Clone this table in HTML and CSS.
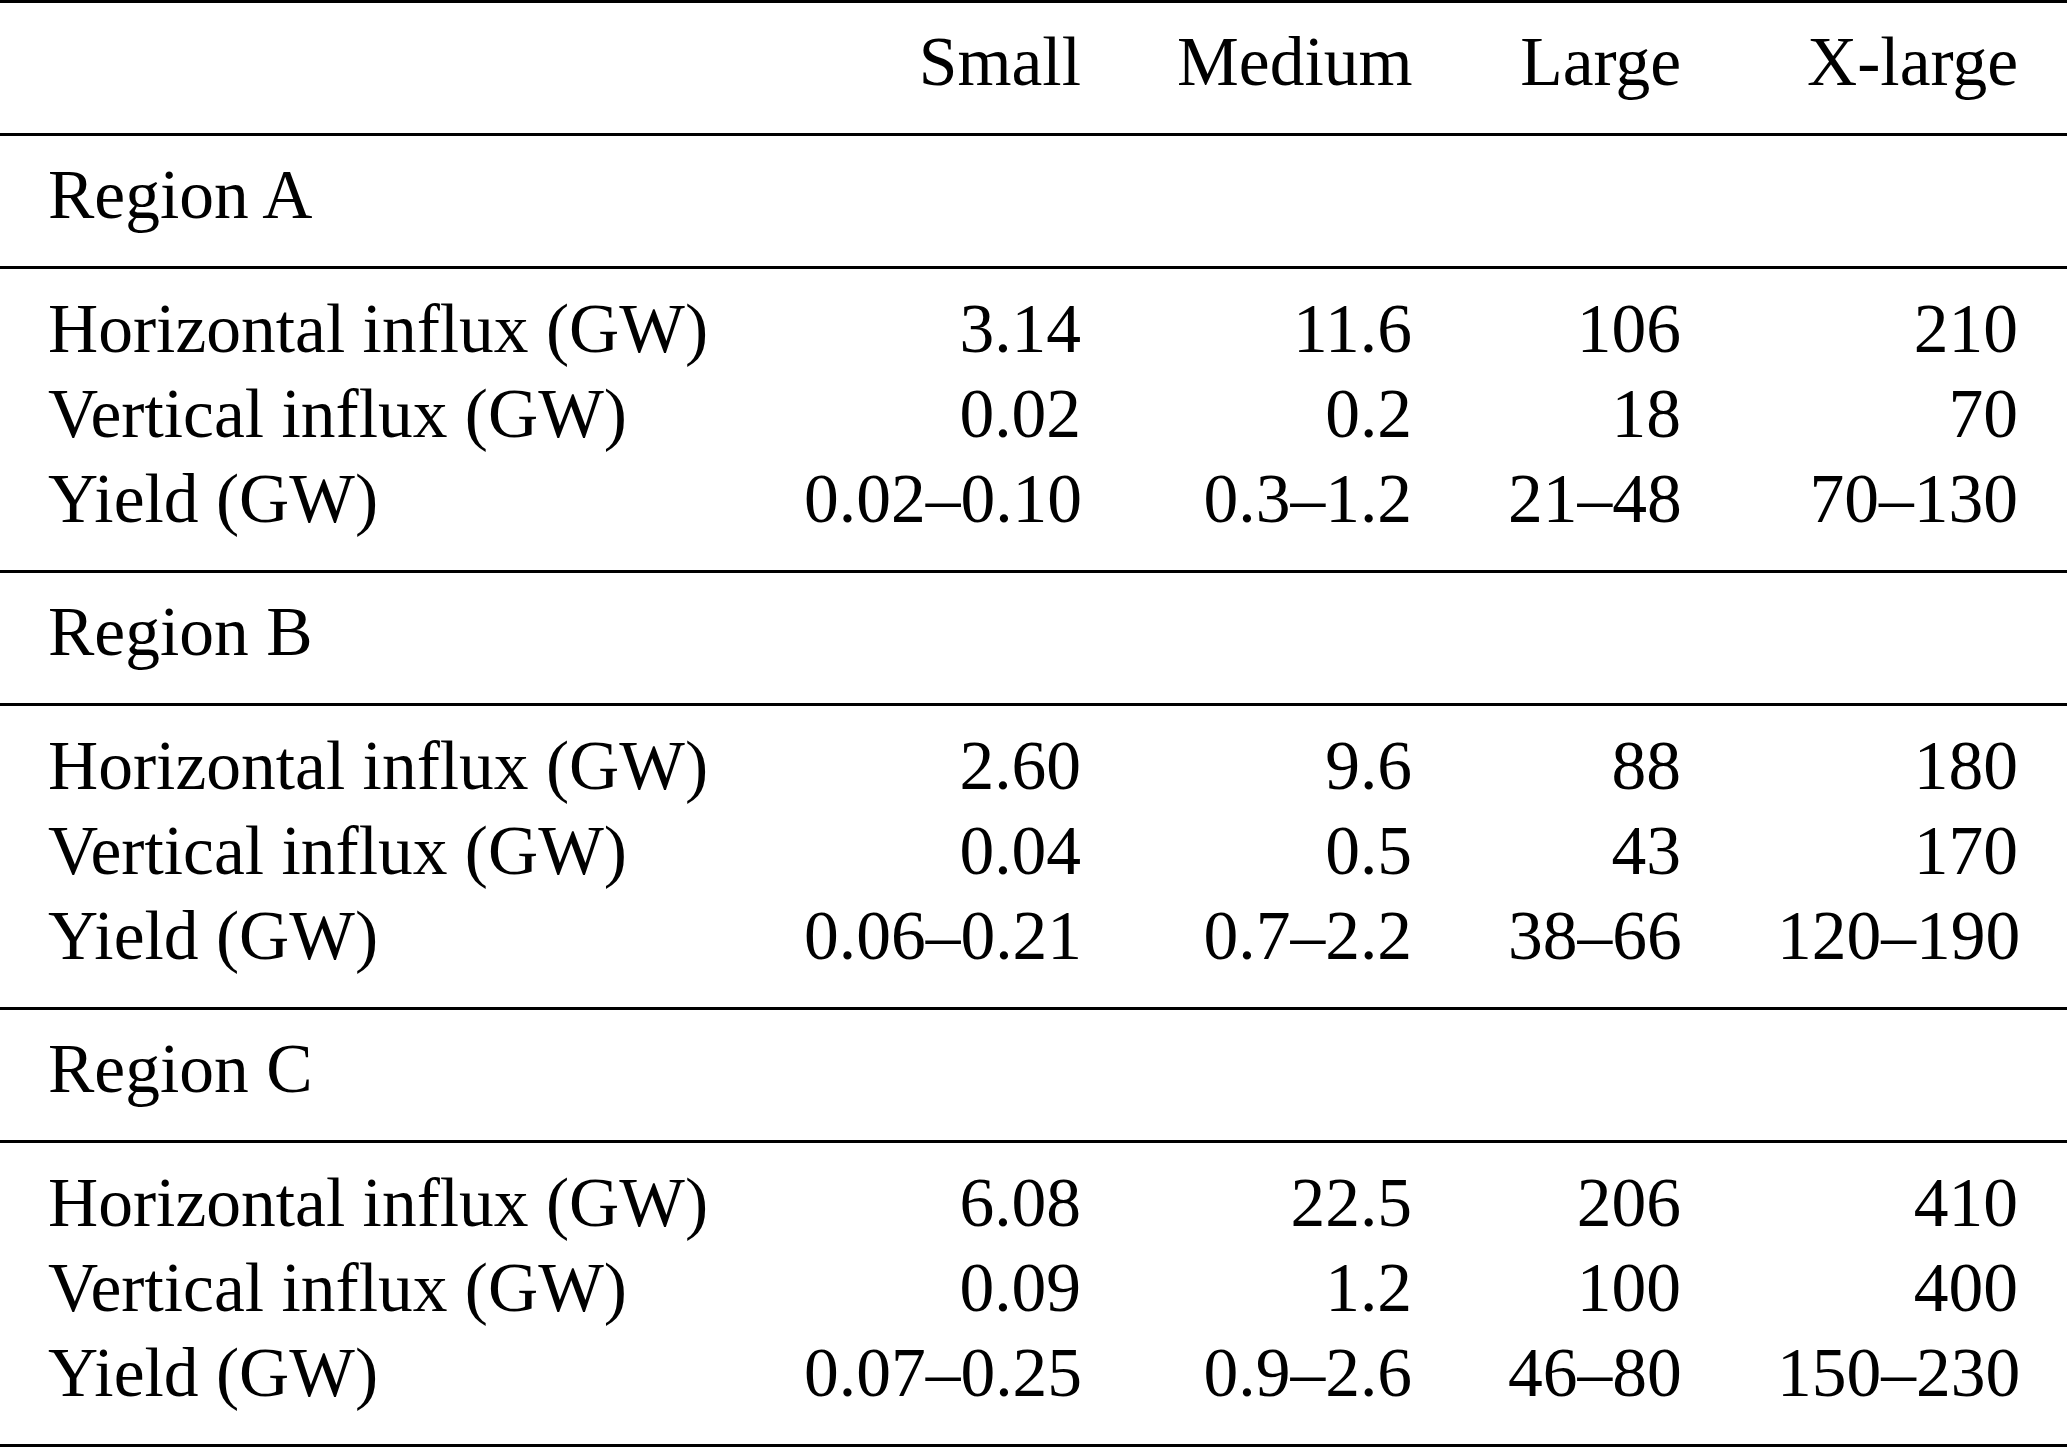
FILE: index.html
```html
<!DOCTYPE html>
<html lang="en">
<head>
<meta charset="utf-8">
<title>Region influx and yield</title>
<link rel="stylesheet" href="styles.css">
</head>
<body>
<table class="tbl">
  <colgroup>
    <col class="c-label">
    <col class="c-small">
    <col class="c-medium">
    <col class="c-large">
    <col class="c-xlarge">
  </colgroup>
  <thead>
    <tr class="single">
      <th></th>
      <th class="num">Small</th>
      <th class="num">Medium</th>
      <th class="num">Large</th>
      <th class="num">X-large</th>
    </tr>
  </thead>
  <tbody>
    <tr class="single"><td colspan="5">Region A</td></tr>
    <tr class="first"><td>Horizontal influx (GW)</td><td class="num">3.14</td><td class="num">11.6</td><td class="num">106</td><td class="num">210</td></tr>
    <tr><td>Vertical influx (GW)</td><td class="num">0.02</td><td class="num">0.2</td><td class="num">18</td><td class="num">70</td></tr>
    <tr class="last"><td>Yield (GW)</td><td class="num">0.02–0.10</td><td class="num">0.3–1.2</td><td class="num">21–48</td><td class="num">70–130</td></tr>

    <tr class="single"><td colspan="5">Region B</td></tr>
    <tr class="first"><td>Horizontal influx (GW)</td><td class="num">2.60</td><td class="num">9.6</td><td class="num">88</td><td class="num">180</td></tr>
    <tr><td>Vertical influx (GW)</td><td class="num">0.04</td><td class="num">0.5</td><td class="num">43</td><td class="num">170</td></tr>
    <tr class="last"><td>Yield (GW)</td><td class="num">0.06–0.21</td><td class="num">0.7–2.2</td><td class="num">38–66</td><td class="num">120–190</td></tr>

    <tr class="single"><td colspan="5">Region C</td></tr>
    <tr class="first"><td>Horizontal influx (GW)</td><td class="num">6.08</td><td class="num">22.5</td><td class="num">206</td><td class="num">410</td></tr>
    <tr><td>Vertical influx (GW)</td><td class="num">0.09</td><td class="num">1.2</td><td class="num">100</td><td class="num">400</td></tr>
    <tr class="last"><td>Yield (GW)</td><td class="num">0.07–0.25</td><td class="num">0.9–2.6</td><td class="num">46–80</td><td class="num">150–230</td></tr>
  </tbody>
</table>
</body>
</html>
```

FILE: styles.css
```css
html, body {
  margin: 0;
  padding: 0;
  background: #ffffff;
}

body {
  font-family: "Liberation Serif", "Times New Roman", serif;
  color: #000000;
}

.tbl {
  width: 2067px;
  table-layout: fixed;
  border-collapse: separate;
  border-spacing: 0;
  border-top: 3px solid #000000;
  font-size: 69.5px;
  line-height: 85px;
}

.c-label { width: 756px; }
.c-small { width: 373px; }
.c-medium { width: 331px; }
.c-large { width: 269px; }
.c-xlarge { width: 338px; }

.tbl th,
.tbl td {
  padding: 0 48px;
  font-weight: normal;
  text-align: left;
  white-space: nowrap;
  vertical-align: top;
}

.tbl .num {
  text-align: right;
}

.tbl tr > :last-child.num {
  padding-right: 49px;
}

.tbl .single > th,
.tbl .single > td {
  padding-top: 16px;
  padding-bottom: 29px;
  border-bottom: 3px solid #000000;
}

.tbl .first > td {
  padding-top: 17px;
}

.tbl .last > td {
  padding-bottom: 29px;
  border-bottom: 3px solid #000000;
}
```
